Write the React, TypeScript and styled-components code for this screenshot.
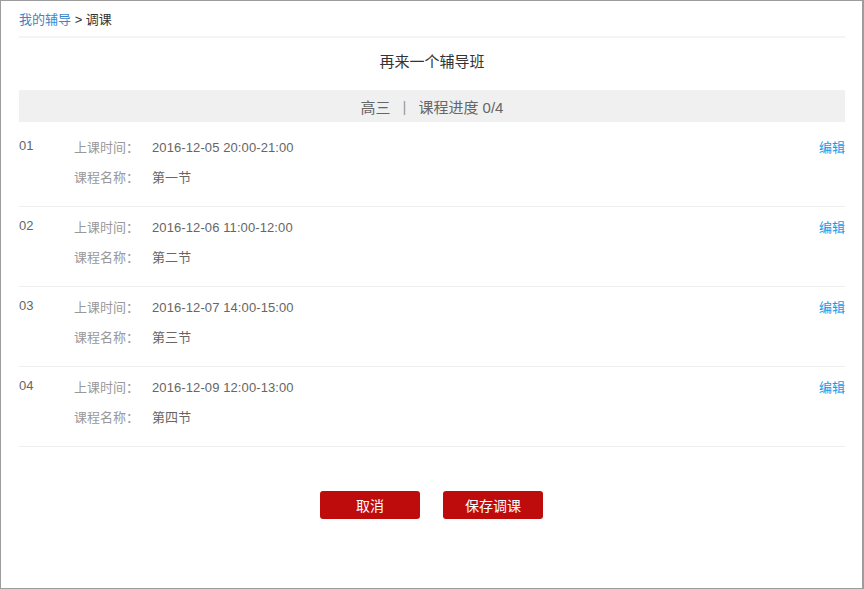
import React from "react";
import styled, { createGlobalStyle } from "styled-components";

const Global = createGlobalStyle`
  html, body { margin: 0; padding: 0; background: #fff; }
  body { font-family: "Liberation Sans", "Noto Sans CJK SC", sans-serif; }
  * { box-sizing: border-box; }
`;

const Frame = styled.div`
  width: 864px;
  height: 589px;
  border: 1px solid #9c9c9c;
  border-right-width: 2px;
  background: #fff;
  padding: 0 17px 0 18px;
  display: flex;
  flex-direction: column;
`;

const Breadcrumb = styled.div`
  height: 37px;
  padding-top: 10px;
  line-height: 18px;
  font-size: 13px;
  color: #333;
  border-bottom: 2px solid #f4f4f4;
`;

const Crumb = styled.a`
  color: #3b87c9;
  text-decoration: none;
`;

const Title = styled.div`
  text-align: center;
  font-size: 15px;
  color: #333;
  line-height: 20px;
  padding: 14px 0 18px;
`;

const InfoBar = styled.div`
  height: 32px;
  background: #f0f0f0;
  display: flex;
  align-items: center;
  justify-content: center;
  font-size: 15px;
  color: #666;
`;

const Sep = styled.span`
  margin: 0 12px;
  color: #999;
`;

const List = styled.div`
  margin-top: 5px;
`;

const Row = styled.div`
  display: flex;
  padding: 6px 0 13px;
  border-bottom: 1px solid #eee;
  font-size: 13px;
`;

const Num = styled.div`
  width: 55px;
  line-height: 30px;
  margin-top: -2px;
  color: #666;
`;

const Fields = styled.div`
  flex: 1;
  display: flex;
  flex-direction: column;
`;

const Field = styled.div`
  display: flex;
  line-height: 30px;
`;

const Label = styled.span`
  width: 78px;
  color: #999;
`;

const Value = styled.span`
  color: #666;
  letter-spacing: 0.1px;
`;

const Edit = styled.a`
  line-height: 30px;
  color: #139be8;
  text-decoration: none;
  font-size: 13px;
`;

const Actions = styled.div`
  display: flex;
  justify-content: center;
  gap: 23px;
  margin-top: 44px;
  padding-right: 1px;
`;

const Button = styled.button`
  width: 100px;
  height: 28px;
  border: none;
  border-radius: 3px;
  background: #be0c0c;
  color: #fff;
  font-family: "Liberation Sans", "Noto Sans CJK SC", sans-serif;
  font-size: 14px;
  cursor: pointer;
`;

const lessons = [
  { n: "01", time: "2016-12-05 20:00-21:00", name: "第一节" },
  { n: "02", time: "2016-12-06 11:00-12:00", name: "第二节" },
  { n: "03", time: "2016-12-07 14:00-15:00", name: "第三节" },
  { n: "04", time: "2016-12-09 12:00-13:00", name: "第四节" },
];

export default function App() {
  return (
    <>
      <Global />
      <Frame>
        <Breadcrumb>
          <Crumb href="#">我的辅导</Crumb> &gt; 调课
        </Breadcrumb>
        <Title>再来一个辅导班</Title>
        <InfoBar>
          高三<Sep>|</Sep>课程进度 0/4
        </InfoBar>
        <List>
          {lessons.map((l) => (
            <Row key={l.n}>
              <Num>{l.n}</Num>
              <Fields>
                <Field>
                  <Label>上课时间：</Label>
                  <Value>{l.time}</Value>
                </Field>
                <Field>
                  <Label>课程名称：</Label>
                  <Value>{l.name}</Value>
                </Field>
              </Fields>
              <Edit href="#">编辑</Edit>
            </Row>
          ))}
        </List>
        <Actions>
          <Button>取消</Button>
          <Button>保存调课</Button>
        </Actions>
      </Frame>
    </>
  );
}
